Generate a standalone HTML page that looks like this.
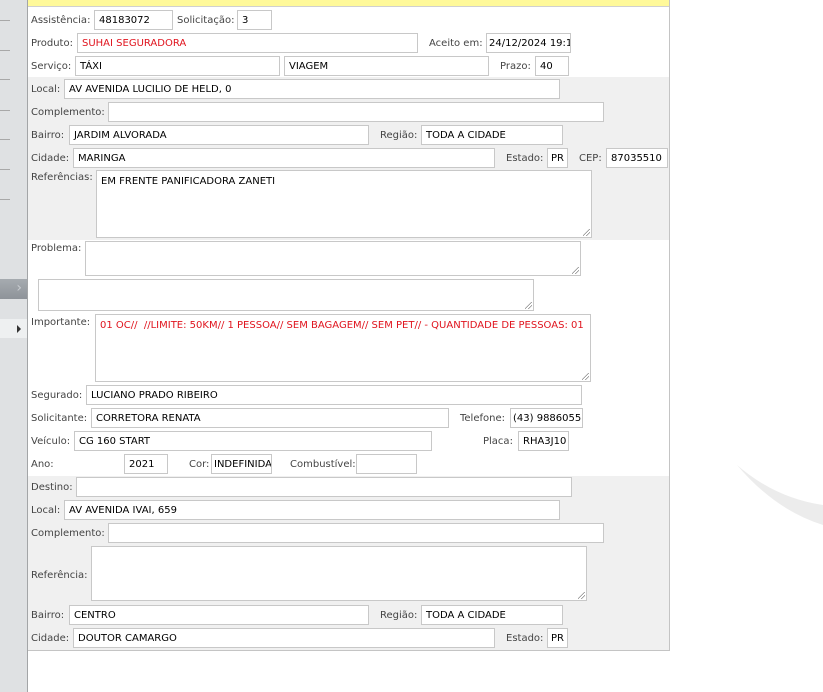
<!DOCTYPE html>
<html><head><meta charset="utf-8"><style>
*{margin:0;padding:0;box-sizing:border-box}
body{width:823px;height:692px;background:#fff;position:relative;overflow:hidden;font-family:"DejaVu Sans","Liberation Sans",sans-serif;font-size:10px;color:#333}
.a{position:absolute}
.l{position:absolute;line-height:12px;white-space:nowrap;color:#444;margin-top:1px}
.i{position:absolute;background:#fff;border:1px solid #c8c8c8;padding:1px 0 0 4px;color:#000;white-space:nowrap;overflow:hidden;font-size:10px}
.t{position:absolute;background:#fff;border:1px solid #c8c8c8;padding:5px 4px;color:#000;font-size:10px;white-space:nowrap;overflow:hidden}
.t::after{content:"";position:absolute;right:1px;bottom:1px;width:7px;height:7px;background:linear-gradient(135deg,transparent 45%,#888 45%,#888 52%,transparent 52%,transparent 70%,#888 70%,#888 77%,transparent 77%)}
.r{color:#e0141e}
.tk{position:absolute;left:0;width:10px;height:1px;background:#a8a8a8}
</style></head><body>
<div class="a" style="left:0;top:0;width:27px;height:692px;background:#dfe1e3"></div>
<div class="a" style="left:27px;top:0;width:1px;height:692px;background:#a3a5a7"></div>
<div class="tk" style="top:20px"></div><div class="tk" style="top:50px"></div><div class="tk" style="top:79px"></div><div class="tk" style="top:110px"></div><div class="tk" style="top:139px"></div><div class="tk" style="top:169px"></div><div class="tk" style="top:199px"></div>
<div class="a" style="left:0;top:279px;width:27px;height:20px;background:linear-gradient(#a6abb0,#8e9399);color:#c8ccd0;font-size:14px;line-height:18px;text-align:right;padding-right:5px">›</div>
<div class="a" style="left:0;top:319px;width:27px;height:19px;background:#eef0f1"></div>
<div class="a" style="left:17px;top:325px;width:0;height:0;border-left:4px solid #333;border-top:4px solid transparent;border-bottom:4px solid transparent"></div>

<div class="a" style="left:28px;top:0;width:641px;height:7px;background:#fff99a;border-bottom:1px solid #d0d0d0"></div>
<div class="a" style="left:669px;top:0;width:1px;height:651px;background:#c4c4c4"></div>
<div class="a" style="left:28px;top:650px;width:642px;height:1px;background:#c4c4c4"></div>
<div class="a" style="left:28px;top:77px;width:641px;height:163px;background:#f0f0f0"></div>
<div class="a" style="left:28px;top:476px;width:641px;height:174px;background:#f0f0f0"></div>
<svg class="a" style="left:735px;top:460px" width="88" height="70"><path d="M2 5 Q40 38 88 45 L88 65 Q40 50 2 5Z" fill="#ececec"/></svg>

<div class="l" style="left:31px;top:14px">Assistência:</div><div class="i" style="left:94px;top:10px;width:79px;height:20px;line-height:17px">48183072</div>
<div class="l" style="left:177px;top:14px">Solicitação:</div><div class="i" style="left:237px;top:10px;width:35px;height:20px;line-height:17px">3</div>
<div class="l" style="left:31px;top:37px">Produto:</div><div class="i r" style="left:77px;top:33px;width:341px;height:20px;line-height:17px">SUHAI SEGURADORA</div>
<div class="l" style="left:429px;top:37px">Aceito em:</div><div class="i" style="left:486px;top:33px;width:85px;height:20px;line-height:17px;padding-left:2px">24/12/2024 19:12</div>
<div class="l" style="left:31px;top:60px">Serviço:</div><div class="i" style="left:75px;top:56px;width:205px;height:20px;line-height:17px">TÁXI</div>
<div class="i" style="left:284px;top:56px;width:205px;height:20px;line-height:17px">VIAGEM</div>
<div class="l" style="left:500px;top:60px">Prazo:</div><div class="i" style="left:535px;top:56px;width:34px;height:20px;line-height:17px">40</div>

<div class="l" style="left:31px;top:83px">Local:</div><div class="i" style="left:64px;top:79px;width:496px;height:20px;line-height:17px">AV AVENIDA LUCILIO DE HELD, 0</div>
<div class="l" style="left:31px;top:106px">Complemento:</div><div class="i" style="left:108px;top:102px;width:496px;height:20px"></div>
<div class="l" style="left:31px;top:129px">Bairro:</div><div class="i" style="left:69px;top:125px;width:300px;height:20px;line-height:17px">JARDIM ALVORADA</div>
<div class="l" style="left:380px;top:129px">Região:</div><div class="i" style="left:421px;top:125px;width:142px;height:20px;line-height:17px">TODA A CIDADE</div>
<div class="l" style="left:31px;top:152px">Cidade:</div><div class="i" style="left:73px;top:148px;width:422px;height:20px;line-height:17px">MARINGA</div>
<div class="l" style="left:506px;top:152px">Estado:</div><div class="i" style="left:547px;top:148px;width:21px;height:20px;line-height:17px;padding-left:3px">PR</div>
<div class="l" style="left:579px;top:152px">CEP:</div><div class="i" style="left:606px;top:148px;width:62px;height:20px;line-height:17px">87035510</div>
<div class="l" style="left:31px;top:171px">Referências:</div><div class="t" style="left:96px;top:170px;width:496px;height:68px">EM FRENTE PANIFICADORA ZANETI</div>

<div class="l" style="left:31px;top:242px">Problema:</div><div class="t" style="left:85px;top:241px;width:496px;height:35px"></div>
<div class="t" style="left:38px;top:279px;width:496px;height:32px"></div>
<div class="l" style="left:31px;top:316px">Importante:</div><div class="t r" style="left:95px;top:314px;width:496px;height:68px">01 OC//&nbsp; //LIMITE: 50KM// 1 PESSOA// SEM BAGAGEM// SEM PET// - QUANTIDADE DE PESSOAS: 01</div>
<div class="l" style="left:31px;top:389px">Segurado:</div><div class="i" style="left:86px;top:385px;width:496px;height:20px;line-height:17px">LUCIANO PRADO RIBEIRO</div>
<div class="l" style="left:31px;top:412px">Solicitante:</div><div class="i" style="left:91px;top:408px;width:358px;height:20px;line-height:17px">CORRETORA RENATA</div>
<div class="l" style="left:460px;top:412px">Telefone:</div><div class="i" style="left:510px;top:408px;width:73px;height:20px;line-height:17px;padding-left:2px">(43) 988605589</div>
<div class="l" style="left:31px;top:435px">Veículo:</div><div class="i" style="left:74px;top:431px;width:358px;height:20px;line-height:17px">CG 160 START</div>
<div class="l" style="left:483px;top:435px">Placa:</div><div class="i" style="left:518px;top:431px;width:51px;height:20px;line-height:17px">RHA3J10</div>
<div class="l" style="left:31px;top:458px">Ano:</div><div class="i" style="left:124px;top:454px;width:44px;height:20px;line-height:17px">2021</div>
<div class="l" style="left:189px;top:458px">Cor:</div><div class="i" style="left:211px;top:454px;width:61px;height:20px;line-height:17px;padding-left:2px">INDEFINIDA</div>
<div class="l" style="left:290px;top:458px">Combustível:</div><div class="i" style="left:356px;top:454px;width:61px;height:20px"></div>

<div class="l" style="left:31px;top:481px">Destino:</div><div class="i" style="left:76px;top:477px;width:496px;height:20px"></div>
<div class="l" style="left:31px;top:504px">Local:</div><div class="i" style="left:64px;top:500px;width:496px;height:20px;line-height:17px">AV AVENIDA IVAI, 659</div>
<div class="l" style="left:31px;top:527px">Complemento:</div><div class="i" style="left:108px;top:523px;width:496px;height:20px"></div>
<div class="l" style="left:31px;top:569px">Referência:</div><div class="t" style="left:91px;top:546px;width:496px;height:55px"></div>
<div class="l" style="left:31px;top:609px">Bairro:</div><div class="i" style="left:69px;top:605px;width:300px;height:20px;line-height:17px">CENTRO</div>
<div class="l" style="left:380px;top:609px">Região:</div><div class="i" style="left:421px;top:605px;width:142px;height:20px;line-height:17px">TODA A CIDADE</div>
<div class="l" style="left:31px;top:632px">Cidade:</div><div class="i" style="left:73px;top:628px;width:422px;height:20px;line-height:17px">DOUTOR CAMARGO</div>
<div class="l" style="left:506px;top:632px">Estado:</div><div class="i" style="left:547px;top:628px;width:21px;height:20px;line-height:17px;padding-left:3px">PR</div>
</body></html>
